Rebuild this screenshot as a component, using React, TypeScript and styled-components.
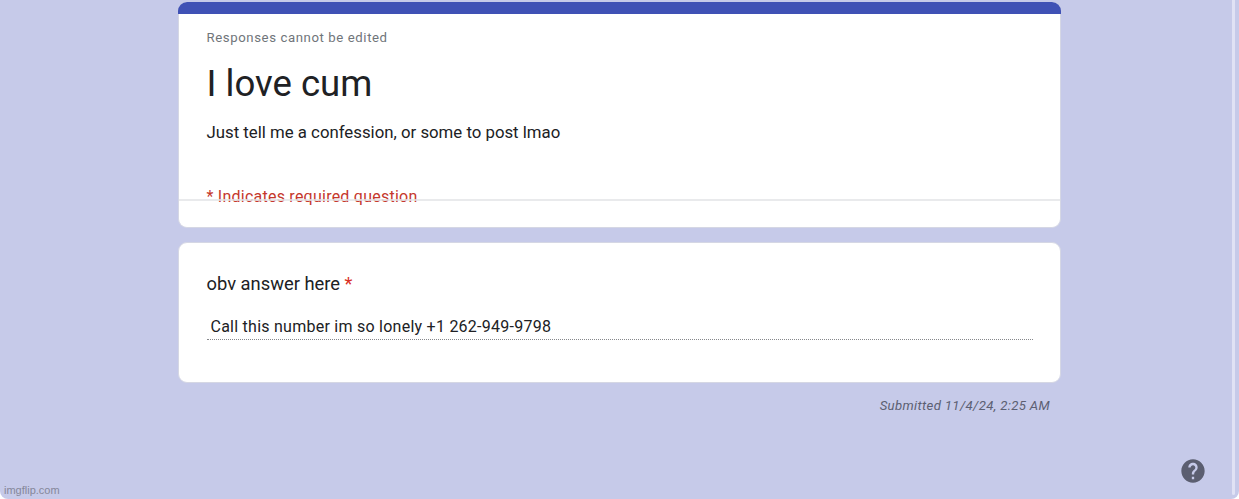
import React from "react";
import styled, { createGlobalStyle } from "styled-components";

const GlobalStyle = createGlobalStyle`
  * {
    box-sizing: border-box;
  }

  body {
    margin: 0;
    background-color: #fff;
    font-family: Roboto, "Liberation Sans", sans-serif;
    color: #202124;
    overflow: hidden;
  }
`;

const Page = styled.div`
  position: relative;
  height: 499px;
  padding-top: 2px;
  border-radius: 0 0 8px 8px;
  background-color: #c6cae9;
  overflow: hidden;
`;

const FormColumn = styled.main`
  width: 883px;
  margin-left: 178px;
`;

const Card = styled.section`
  border: 1px solid #d5d7e4;
  border-radius: 9px;
  background-color: #fff;
`;

const HeaderCard = styled(Card)`
  height: 226px;
  border-top: 0;
`;

const ThemeStripe = styled.div`
  height: 12px;
  margin: 0 -1px;
  border-radius: 9px 9px 0 0;
  background-color: #3f51b5;
`;

const HeaderContent = styled.div`
  position: relative;
  height: 187px;
  padding: 14px 28px 0 27.5px;

  /* the divider runs over the required note */
  &::after {
    content: "";
    position: absolute;
    right: 0;
    bottom: 0;
    left: 0;
    height: 2px;
    background-color: rgba(228, 229, 231, 0.8);
  }
`;

const Notice = styled.div`
  font-size: 13.2px;
  line-height: 20px;
  letter-spacing: 0.59px;
  color: #70757a;
`;

const Title = styled.h1`
  margin: 14px 0 0;
  font-size: 36.6px;
  font-weight: 400;
  line-height: 44px;
`;

const Description = styled.p`
  margin: 14px 0 0;
  font-size: 16.8px;
  line-height: 24px;
`;

const RequiredNote = styled.div`
  margin-top: 41px;
  font-size: 16px;
  line-height: 24px;
  letter-spacing: 0.24px;
  color: #c5372c;
`;

const QuestionCard = styled(Card)`
  height: 140.5px;
  margin-top: 14px;
  padding: 27px 27px 0 27.5px;
`;

const QuestionTitle = styled.h2`
  margin: 0;
  font-size: 18.35px;
  font-weight: 400;
  line-height: 27px;
`;

const Asterisk = styled.span`
  color: #d93025;
`;

const Answer = styled.div`
  height: 27px;
  margin-top: 16px;
  padding-left: 4px;
  border-bottom: 1px dotted #85878b;
  font-size: 16px;
  line-height: 28px;
  letter-spacing: 0.25px;
`;

const SubmittedAt = styled.div`
  margin-top: 13px;
  padding-right: 11px;
  font-size: 13.2px;
  font-style: italic;
  line-height: 20px;
  letter-spacing: 0.34px;
  text-align: right;
  color: #5c5f72;
`;

const HelpButton = styled.button`
  position: absolute;
  top: 457px;
  left: 1179px;
  width: 28px;
  height: 28px;
  padding: 0;
  border: 0;
  background: none;
  color: #5b5e70;

  svg {
    display: block;
  }
`;

const ScrollTrack = styled.div`
  position: absolute;
  top: 0;
  right: 4px;
  width: 3px;
  height: 495px;
  border-radius: 0 0 2px 2px;
  background-color: #e0e2f5;
`;

const Watermark = styled.div`
  position: absolute;
  left: 4px;
  bottom: 2px;
  font-family: "Liberation Sans", Arial, sans-serif;
  font-size: 11px;
  line-height: 13px;
  color: #85879a;
`;

function App() {
  return (
    <Page>
      <GlobalStyle />
      <FormColumn>
        <HeaderCard>
          <ThemeStripe />
          <HeaderContent>
            <Notice>Responses cannot be edited</Notice>
            <Title>I love cum</Title>
            <Description>
              Just tell me a confession, or some to post lmao
            </Description>
            <RequiredNote>* Indicates required question</RequiredNote>
          </HeaderContent>
        </HeaderCard>
        <QuestionCard>
          <QuestionTitle>
            obv answer here <Asterisk>*</Asterisk>
          </QuestionTitle>
          <Answer>Call this number im so lonely +1 262-949-9798</Answer>
        </QuestionCard>
        <SubmittedAt>Submitted 11/4/24, 2:25 AM</SubmittedAt>
      </FormColumn>
      <HelpButton aria-label="Help">
        <svg width="28" height="28" viewBox="0 0 24 24" fill="currentColor">
          <path d="M12 2C6.48 2 2 6.48 2 12s4.48 10 10 10 10-4.48 10-10S17.52 2 12 2zm1 17h-2v-2h2v2zm2.07-7.75l-.9.92C13.45 12.9 13 13.5 13 15h-2v-.5c0-1.1.45-2.1 1.17-2.83l1.24-1.26c.37-.36.59-.86.59-1.41 0-1.1-.9-2-2-2s-2 .9-2 2H8c0-2.21 1.79-4 4-4s4 1.79 4 4c0 .88-.36 1.68-.93 2.25z" />
        </svg>
      </HelpButton>
      <ScrollTrack />
      <Watermark>imgflip.com</Watermark>
    </Page>
  );
}

export default App;
